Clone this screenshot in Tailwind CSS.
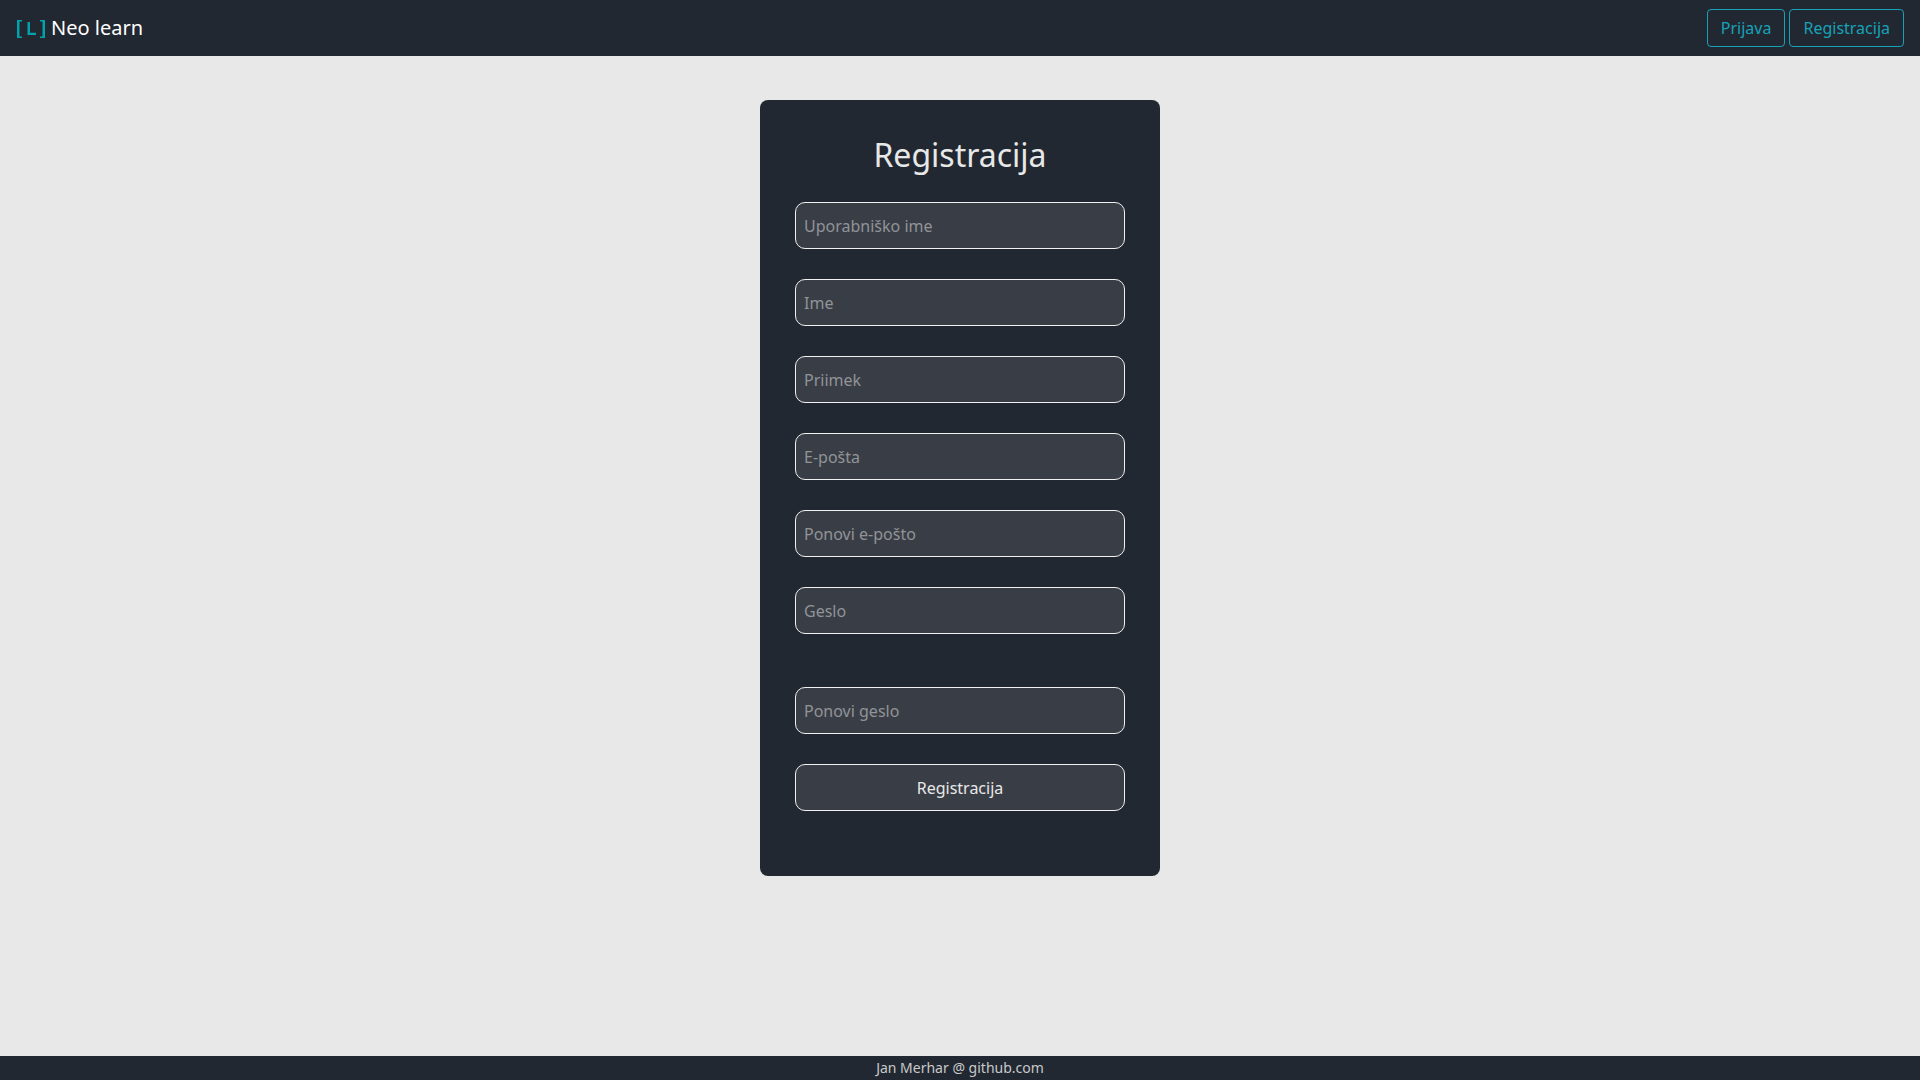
<!DOCTYPE html>
<html lang="sl">
<head>
<meta charset="utf-8">
<meta name="viewport" content="width=device-width, initial-scale=1">
<title>Neo learn</title>
<script src="https://cdn.jsdelivr.net/npm/@tailwindcss/browser@4"></script>
</head>
<body class="flex min-h-screen flex-col bg-[#e8e8e8] font-['Noto_Sans',sans-serif] text-base text-[#e8e8e8]">
  <header class="flex h-14 items-center justify-between bg-[#222831] px-4">
    <a href="#" class="flex items-center gap-[5px] text-xl text-white">
      <svg class="h-5 w-[30px]" viewBox="0 0 30 20" fill="#00a3ab" aria-hidden="true">
        <path d="M1 2H6V3.500H3.500V18.500H6V20H1ZM24 2H29V20H24V18.500H26.500V3.500H24ZM11.500 4H14V14.800H20V17H11.500Z"/>
      </svg>
      Neo learn
    </a>
    <nav class="flex gap-1 text-[#17a2b8]">
      <a href="#" class="flex h-[38px] items-center rounded border border-[#17a2b8] px-[13px]">Prijava</a>
      <a href="#" class="flex h-[38px] items-center rounded border border-[#17a2b8] px-[13px]">Registracija</a>
    </nav>
  </header>
  <main class="flex flex-1 flex-col items-center py-11">
    <form class="flex w-full max-w-[400px] flex-col gap-[30px] rounded-lg bg-[#222831] px-[35px] pt-[31px] pb-[65px]">
      <h1 class="-mb-[7px] text-center text-[32px] leading-12">Registracija</h1>
      <input type="text" aria-label="Uporabniško ime" placeholder="Uporabniško ime" class="h-[47px] rounded-[10px] border border-[#f0f0f0] bg-[#393e46] px-2 placeholder:text-[#919397]">
      <input type="text" aria-label="Ime" placeholder="Ime" class="h-[47px] rounded-[10px] border border-[#f0f0f0] bg-[#393e46] px-2 placeholder:text-[#919397]">
      <input type="text" aria-label="Priimek" placeholder="Priimek" class="h-[47px] rounded-[10px] border border-[#f0f0f0] bg-[#393e46] px-2 placeholder:text-[#919397]">
      <input type="email" aria-label="E-pošta" placeholder="E-pošta" class="h-[47px] rounded-[10px] border border-[#f0f0f0] bg-[#393e46] px-2 placeholder:text-[#919397]">
      <input type="email" aria-label="Ponovi e-pošto" placeholder="Ponovi e-pošto" class="h-[47px] rounded-[10px] border border-[#f0f0f0] bg-[#393e46] px-2 placeholder:text-[#919397]">
      <input type="password" aria-label="Geslo" placeholder="Geslo" class="mb-[23px] h-[47px] rounded-[10px] border border-[#f0f0f0] bg-[#393e46] px-2 placeholder:text-[#919397]">
      <input type="password" aria-label="Ponovi geslo" placeholder="Ponovi geslo" class="h-[47px] rounded-[10px] border border-[#f0f0f0] bg-[#393e46] px-2 placeholder:text-[#919397]">
      <button type="submit" class="h-[47px] rounded-[10px] border border-[#f0f0f0] bg-[#393e46]">Registracija</button>
    </form>
  </main>
  <footer class="flex h-6 items-center justify-center bg-[#222831] text-sm text-[#c8c9cb]">Jan Merhar @ github.com</footer>
</body>
</html>
